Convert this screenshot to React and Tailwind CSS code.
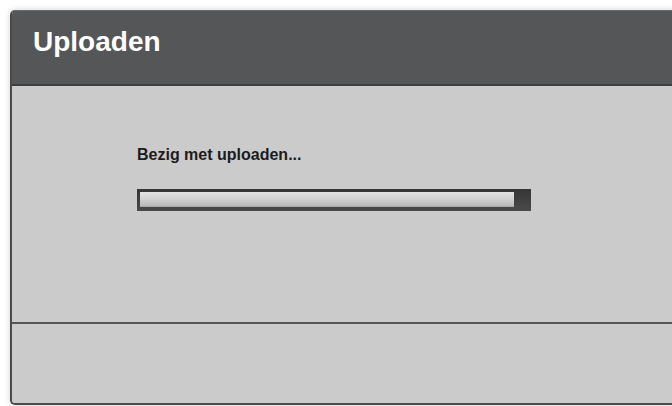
export default function App() {
  return (
    <div className="w-[672px] h-[406px] overflow-hidden bg-white pl-[10px] pt-[10px]" style={{ fontFamily: '"Liberation Sans", Arial, sans-serif' }}>
      {/* dialog window, running past the right edge of the viewport */}
      <div className="w-[720px] h-[395px] rounded-[5px] overflow-hidden flex flex-col border-l-2 border-b-2 border-[#4a4a4a] bg-[#cbcbcb] shadow-[0_0_6px_rgba(0,0,0,0.18)]">
        {/* title bar */}
        <div className="h-[76px] shrink-0 bg-[#545658] border-t border-[#6b6c6e] border-b-2 border-b-[#3d3e3f] pl-[21px] pt-[17px]">
          <h1 className="text-[28px] leading-none font-bold text-white">Uploaden</h1>
        </div>

        {/* body */}
        <div className="h-[238px] shrink-0 border-b-2 border-[#555] pl-[125px] pt-[61px]">
          <p className="text-[16px] leading-none font-bold text-[#1c1c1c]">Bezig met uploaden...</p>
          <div className="mt-[26px] w-[394px] h-[22px] bg-gradient-to-b from-[#353535] to-[#4a4a4a] pt-[3px] pb-[4px] pl-[3px]">
            <div className="w-[374px] h-full bg-gradient-to-b from-[#e4e4e4] via-[#d2d2d2] to-[#b9b9b9] border-b border-[#a8a8a8]" />
          </div>
        </div>

        {/* footer */}
        <div className="flex-1 bg-[#cbcbcb]" />
      </div>
    </div>
  );
}
